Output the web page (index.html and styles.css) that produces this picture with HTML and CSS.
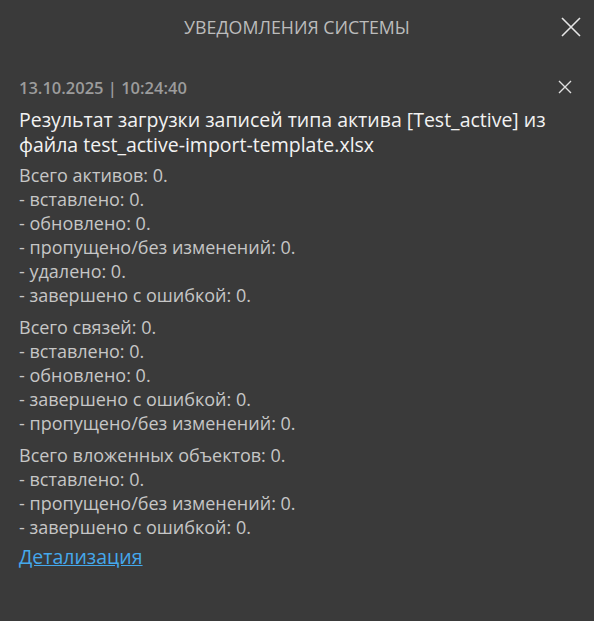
FILE: index.html
```html
<!DOCTYPE html>
<html lang="ru">

<head>
    <meta charset="UTF-8">
    <meta name="viewport" content="width=device-width, initial-scale=1.0">
    <title>Уведомления системы</title>
    <link rel="stylesheet" href="styles.css">
</head>

<body>
    <div class="panel">
        <div class="panel-head">
            <span class="panel-title">Уведомления системы</span>
            <button class="close-btn big" aria-label="Закрыть">
                <svg width="20" height="20" viewBox="0 0 20 20"><path d="M1 1L19 19M19 1L1 19" stroke="#e6e6e6" stroke-width="1.6"/></svg>
            </button>
        </div>
        <div class="notice">
            <div class="notice-top">
                <span class="notice-date">13.10.2025 | 10:24:40</span>
                <button class="close-btn small" aria-label="Удалить">
                    <svg width="14" height="14" viewBox="0 0 14 14"><path d="M1 1L13 13M13 1L1 13" stroke="#e0e0e0" stroke-width="1.4"/></svg>
                </button>
            </div>
            <div class="notice-title">Результат загрузки записей типа актива [Test_active] из файла test_active-import-template.xlsx</div>
            <div class="notice-body">
                <p>Всего активов: 0.<br>- вставлено: 0.<br>- обновлено: 0.<br>- пропущено/без изменений: 0.<br>- удалено: 0.<br>- завершено с ошибкой: 0.</p>
                <p>Всего связей: 0.<br>- вставлено: 0.<br>- обновлено: 0.<br>- завершено с ошибкой: 0.<br>- пропущено/без изменений: 0.</p>
                <p>Всего вложенных объектов: 0.<br>- вставлено: 0.<br>- пропущено/без изменений: 0.<br>- завершено с ошибкой: 0.</p>
            </div>
            <a class="notice-link" href="#">Детализация</a>
        </div>
    </div>
</body>

</html>
```

FILE: styles.css
```css
* {
    margin: 0;
    padding: 0;
    box-sizing: border-box;
}

html,
body {
    height: 100%;
    background: #3a3a3a;
}

body {
    font-family: "Open Sans", "Noto Sans", sans-serif;
    color: #c6c6c6;
}

.panel {
    height: 100%;
}

.panel-head {
    position: relative;
    height: 53px;
    display: flex;
    align-items: center;
    justify-content: center;
}

.panel-title {
    font-size: 17.8px;
    text-transform: uppercase;
    color: #bcbcbc;
}

.close-btn {
    background: none;
    border: 0;
    cursor: pointer;
    display: flex;
}

.close-btn.big {
    position: absolute;
    right: 13px;
    top: 17px;
}

.notice {
    padding: 23px 20px 0 19px;
}

.notice-top {
    display: flex;
    justify-content: space-between;
    align-items: center;
    height: 22px;
}

.notice-date {
    font-size: 16.5px;
    font-weight: 600;
    color: #9c9c9c;
}

.close-btn.small {
    margin-right: 2px;
}

.notice-title {
    margin-top: 9px;
    font-size: 19.5px;
    line-height: 25px;
    color: #f2f2f2;
}

.notice-body {
    margin-top: 6px;
    font-size: 18px;
    line-height: 24px;
}

.notice-body p {
    margin-bottom: 8px;
}

.notice-link {
    display: inline-block;
    margin-top: -2px;
    font-size: 19.5px;
    line-height: 24px;
    color: #45a8ec;
    text-decoration: underline;
}
```
